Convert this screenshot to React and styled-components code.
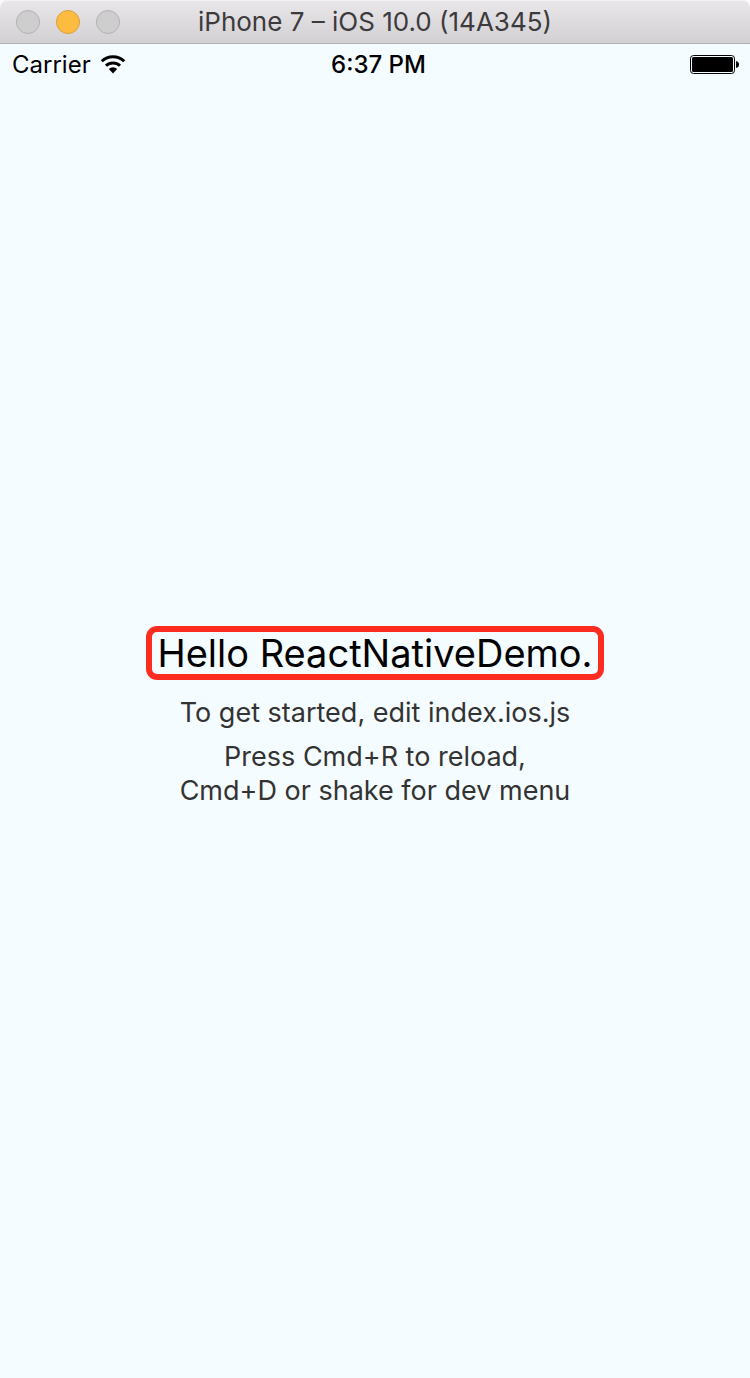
import React from "react";
import styled, { createGlobalStyle } from "styled-components";

const GlobalStyle = createGlobalStyle`
  *, *::before, *::after { box-sizing: border-box; }
  body {
    margin: 0;
    background: #f5fcff;
    font-family: Inter, "Liberation Sans", sans-serif;
  }
`;

const Window = styled.div`
  display: flex;
  flex-direction: column;
  min-height: 100vh;
  background: #f5fcff;
`;

const TitleBar = styled.header`
  display: grid;
  grid-template-columns: 1fr auto 1fr;
  align-items: center;
  height: 44px;
  padding: 1px 16px 0;
  border-bottom: 1px solid #b1afb1;
  border-radius: 8px 8px 0 0;
  background: linear-gradient(#e9e7e9, #d2d0d2);
  box-shadow: inset 0 1px 0 #f4f3f4, 0 0 0 8px #fafafa;
  clip-path: inset(0);
`;

const WindowControls = styled.div`
  display: flex;
  gap: 16px;
`;

const ControlButton = styled.button`
  width: 24px;
  height: 24px;
  padding: 0;
  border: 1px solid ${(p) => (p.$active ? "#d9a03c" : "#b3b1b3")};
  border-radius: 50%;
  background: ${(p) => (p.$active ? "#fdbc40" : "#cfcecf")};
`;

const WindowTitle = styled.h1`
  margin: 0;
  font-size: 26px;
  font-weight: 400;
  line-height: 32px;
  color: #3c3a3d;
  white-space: nowrap;
`;

const StatusBar = styled.div`
  display: grid;
  grid-template-columns: 1fr auto 1fr;
  align-items: center;
  height: 42px;
  padding: 0 11px 0 12px;
  font-size: 24px;
  line-height: 32px;
  color: #000;
`;

const Carrier = styled.div`
  display: flex;
  align-items: center;
  gap: 9px;
`;

const Clock = styled.time`
  padding-left: 6px;
  font-weight: 500;
`;

const BatterySlot = styled.div`
  display: flex;
  justify-content: flex-end;
`;

const Main = styled.main`
  flex: 1;
  display: flex;
  flex-direction: column;
  align-items: center;
  justify-content: center;
  padding-bottom: 20px;
  text-align: center;
`;

const Welcome = styled.h2`
  margin: 0 0 16px;
  padding: 0 5px;
  border: 6px solid #fc2d20;
  border-radius: 11px;
  font-size: 38px;
  font-weight: 400;
  line-height: 42px;
  color: #000;
`;

const Instructions = styled.p`
  margin: 0 0 10px;
  font-size: 27px;
  line-height: 34px;
  color: #333;
`;

export default function App() {
  return (
    <Window>
      <GlobalStyle />
      <TitleBar>
        <WindowControls>
          <ControlButton aria-label="Close" />
          <ControlButton $active aria-label="Minimize" />
          <ControlButton aria-label="Zoom" />
        </WindowControls>
        <WindowTitle>iPhone 7 – iOS 10.0 (14A345)</WindowTitle>
      </TitleBar>
      <StatusBar>
        <Carrier>
          Carrier
          <svg width="26" height="20" viewBox="0 0 26 20" role="img" aria-label="Wi-Fi">
            <path d="M1.800 6.200a16 16 0 0 1 22.400 0M6 10.800a10 10 0 0 1 14 0" fill="none" stroke="#000" strokeWidth="3" />
            <path d="M8.800 14a6.200 6.200 0 0 1 8.400 0L13 18.500z" />
          </svg>
        </Carrier>
        <Clock>6:37 PM</Clock>
        <BatterySlot>
          <svg width="49" height="20" viewBox="0 0 49 20" role="img" aria-label="Battery full">
            <rect x="0.500" y="0.500" width="44" height="18" rx="3" fill="none" stroke="#000" />
            <rect x="2" y="2" width="41" height="15" rx="1.500" />
            <path d="M46 6q3 .5 3 3.500t-3 3.500z" />
          </svg>
        </BatterySlot>
      </StatusBar>
      <Main>
        <Welcome>Hello ReactNativeDemo.</Welcome>
        <Instructions>To get started, edit index.ios.js</Instructions>
        <Instructions>
          Press Cmd+R to reload,
          <br />
          Cmd+D or shake for dev menu
        </Instructions>
      </Main>
    </Window>
  );
}
